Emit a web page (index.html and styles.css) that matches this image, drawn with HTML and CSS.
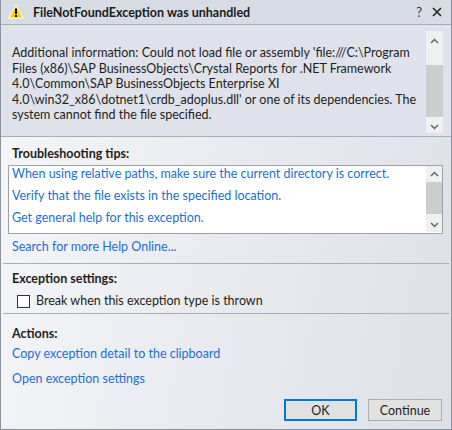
FILE: index.html
```html
<!DOCTYPE html>
<html>
<head>
<meta charset="utf-8">
<link rel="stylesheet" href="styles.css">
</head>
<body>
<div class="window">
  <header class="titlebar">
    <svg class="warn" width="16" height="15" viewBox="0 0 16 15">
      <path d="M8 0.8 L15.3 14.2 L0.7 14.2 Z" fill="#ffd200" stroke="#ffffff" stroke-width="1" stroke-linejoin="round"/>
      <rect x="7" y="4.5" width="2" height="5.5" fill="#000"/>
      <rect x="7" y="11" width="2" height="2" fill="#000"/>
    </svg>
    <span class="title">FileNotFoundException was unhandled</span>
    <span class="tb-help">?</span>
    <svg class="tb-close" width="10" height="10" viewBox="0 0 10 10">
      <path d="M1 1 L9 9 M9 1 L1 9" stroke="#1e1e1e" stroke-width="1.5"/>
    </svg>
  </header>

  <section class="info">
    <p class="info-text">Additional information: Could not load file or assembly 'file:///C:\Program<br>Files (x86)\SAP BusinessObjects\Crystal Reports for .NET Framework<br>4.0\Common\SAP BusinessObjects Enterprise XI<br>4.0\win32_x86\dotnet1\crdb_adoplus.dll' or one of its dependencies. The<br>system cannot find the file specified.</p>
    <div class="vscroll big">
      <svg class="arrow" width="9" height="6" viewBox="0 0 9 6"><path d="M1 5 L4.5 1.5 L8 5" fill="none" stroke="#606060" stroke-width="1.4"/></svg>
      <div class="track"><div class="thumb big-thumb"></div></div>
      <svg class="arrow" width="9" height="6" viewBox="0 0 9 6"><path d="M1 1 L4.5 4.5 L8 1" fill="none" stroke="#606060" stroke-width="1.4"/></svg>
    </div>
  </section>

  <section class="lower">
    <h2 class="heading h-tips">Troubleshooting tips:</h2>
    <div class="tipbox">
      <ul class="tips">
        <li>When using relative paths, make sure the current directory is correct.</li>
        <li>Verify that the file exists in the specified location.</li>
        <li>Get general help for this exception.</li>
      </ul>
      <div class="vscroll small">
        <svg class="arrow" width="9" height="6" viewBox="0 0 9 6"><path d="M1 5 L4.5 1.5 L8 5" fill="none" stroke="#606060" stroke-width="1.4"/></svg>
        <div class="track"><div class="thumb small-thumb"></div></div>
        <svg class="arrow" width="9" height="6" viewBox="0 0 9 6"><path d="M1 1 L4.5 4.5 L8 1" fill="none" stroke="#606060" stroke-width="1.4"/></svg>
      </div>
    </div>
    <a class="link search">Search for more Help Online...</a>

    <hr class="sep sep1">

    <h2 class="heading h-exc">Exception settings:</h2>
    <label class="check">
      <span class="box"></span>
      <span>Break when this exception type is thrown</span>
    </label>

    <hr class="sep sep2">

    <h2 class="heading h-act">Actions:</h2>
    <a class="link act1">Copy exception detail to the clipboard</a>
    <a class="link act2">Open exception settings</a>

    <div class="buttons">
      <button class="btn btn-ok">OK</button>
      <button class="btn">Continue</button>
    </div>
  </section>
</div>
</body>
</html>
```

FILE: styles.css
```css
* { box-sizing: border-box; }
html, body { margin: 0; padding: 0; }
body {
  width: 452px;
  height: 430px;
  font-family: "Lato", "Noto Sans", sans-serif;
  font-size: 12.5px;
  color: #1e1e1e;
  background: #ffffff;
}
.window {
  width: 452px;
  height: 430px;
  border: 1px solid #8d939d;
  border-top: none;
  display: flex;
  flex-direction: column;
  overflow: hidden;
}
.titlebar {
  height: 25px;
  flex: none;
  background: #d6dbe4;
  border-bottom: 1px solid #a4acb9;
  display: flex;
  align-items: center;
  padding-left: 7px;
  padding-right: 9px;
}
.warn { flex: none; margin-top: -1px; }
.title {
  font-weight: bold;
  font-size: 12.5px;
  margin-left: 9px;
  flex: 1;
  color: #1a1a1a;
}
.tb-help {
  font-size: 13px;
  font-weight: normal;
  color: #333;
  margin-right: 10px;
}
.tb-close { flex: none; }

.info {
  height: 112px;
  flex: none;
  background: #dfe2ea;
  border-bottom: 1px solid #a8afbb;
  display: flex;
  align-items: flex-start;
  padding-left: 11px;
  padding-right: 8px;
}
.info-text {
  margin: 20px 0 0 0;
  flex: 1;
  line-height: 15.5px;
  white-space: nowrap;
}
.vscroll {
  flex: none;
  width: 17px;
  background: #f0f0f0;
  display: flex;
  flex-direction: column;
  align-items: center;
}
.vscroll.big { height: 102px; margin-top: 6px; }
.vscroll .arrow { flex: none; }
.vscroll.big .arrow { margin: 7px 0; }
.track { flex: 1; width: 100%; display: flex; flex-direction: column; }
.thumb { background: #cdcdcd; width: 100%; }
.big-thumb { height: 52px; margin-top: 14px; }
.vscroll.small { height: 66px; width: 16px; }
.vscroll.small .arrow { margin: 5px 0 4px; }
.small-thumb { height: 32px; margin-top: 1px; }

.lower {
  flex: 1;
  background: linear-gradient(100deg, #f4f5f8 0%, #e8eaef 50%, #dde0e7 100%);
  padding: 0 8px 0 7px;
  display: flex;
  flex-direction: column;
}
.heading {
  font-size: 12.5px;
  font-weight: bold;
  margin: 0;
  line-height: 16px;
  padding-left: 4px;
}
.h-tips { margin-top: 9px; }
.tipbox {
  margin-top: 3px;
  height: 69px;
  width: 435px;
  border: 1px solid #a0a0a0;
  background: #ffffff;
  display: flex;
}
.tips {
  list-style: none;
  margin: 0;
  padding: 0 0 0 3px;
  flex: 1;
}
.tips li {
  height: 22px;
  line-height: 15px;
  color: #1b6fd2;
}
.link {
  color: #1b6fd2;
  line-height: 16px;
  padding-left: 4px;
  display: block;
}
.search { margin-top: 5px; }
.sep {
  border: none;
  border-top: 1px solid #a8afbb;
  margin: 0 -6px 0 -5px;
  height: 0;
}
.sep1 { margin-top: 8px; }
.h-exc { margin-top: 7px; }
.check {
  display: flex;
  align-items: center;
  margin-top: 6px;
  padding-left: 9px;
  line-height: 16px;
}
.box {
  width: 13px;
  height: 13px;
  border: 1px solid #333333;
  background: #ffffff;
  margin-right: 6px;
  flex: none;
}
.sep2 { margin-top: 4px; }
.h-act { margin-top: 12px; }
.act1 { margin-top: 4px; }
.act2 { margin-top: 9px; }
.buttons {
  margin-top: 12px;
  display: flex;
  justify-content: flex-end;
  gap: 11px;
  padding-right: 1px;
}
.btn {
  font-family: inherit;
  font-size: 12.5px;
  color: #1e1e1e;
  height: 22px;
  background: #e1e1e1;
  border: 1px solid #adadad;
  padding: 0;
  width: 74px;
}
.btn-ok {
  width: 73px;
  border: 2px solid #0078d7;
}
```
